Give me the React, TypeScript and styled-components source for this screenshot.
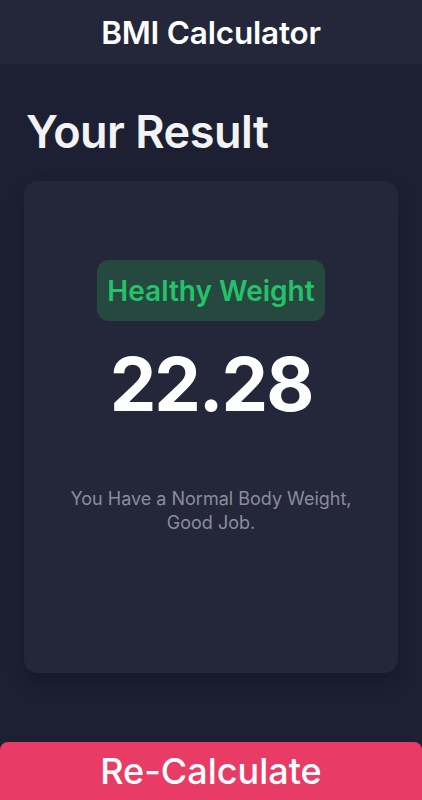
import React from "react";
import styled, { createGlobalStyle } from "styled-components";

const Global = createGlobalStyle`
  html, body { margin: 0; padding: 0; background: #1d2033; }
  body { font-family: Inter, "Noto Sans", sans-serif; -webkit-font-smoothing: antialiased; }
  * { box-sizing: border-box; }
`;

const Page = styled.div`
  display: flex;
  flex-direction: column;
  height: 800px;
  overflow: hidden;
  background: #1d2033;
`;

const Header = styled.header`
  height: 64px;
  flex: none;
  display: flex;
  align-items: center;
  justify-content: center;
  background: #24263a;
  color: #ffffff;
  font-size: 31.5px;
  font-weight: 600;
  letter-spacing: -0.2px;
`;

const Main = styled.main`
  flex: 1;
  display: flex;
  flex-direction: column;
  padding: 0 24px;
`;

const Title = styled.h1`
  margin: 40px 0 0 2px;
  height: 77px;
  color: #f3f3f5;
  font-size: 45px;
  font-weight: 600;
  line-height: 56px;
  letter-spacing: -0.5px;
`;

const Card = styled.section`
  height: 492px;
  background: #24263a;
  border-radius: 14px;
  box-shadow: 0 10px 18px rgba(10, 12, 24, 0.35);
  display: flex;
  flex-direction: column;
  align-items: center;
  padding-top: 79px;
`;

const Badge = styled.div`
  height: 61px;
  padding: 0 10px;
  border-radius: 12px;
  background: #26493f;
  color: #24c26a;
  font-size: 28px;
  font-weight: 600;
  display: flex;
  align-items: center;
`;

const Score = styled.div`
  margin-top: 10px;
  color: #ffffff;
  font-size: 74px;
  font-weight: 700;
  line-height: 106px;
  letter-spacing: -2px;
`;

const Message = styled.p`
  margin: 50px 0 0;
  color: #8b8c9e;
  font-size: 18px;
  line-height: 24px;
  text-align: center;
`;

const Button = styled.button`
  margin-top: auto;
  height: 58px;
  border: none;
  border-radius: 8px 8px 0 0;
  background: #e83b65;
  color: #ffffff;
  font-family: Inter, "Noto Sans", sans-serif;
  font-size: 36px;
  font-weight: 500;
  line-height: 58px;
  padding: 0;
  width: 100%;
`;

export default function App() {
  return (
    <>
      <Global />
      <Page>
        <Header>BMI Calculator</Header>
        <Main>
          <Title>Your Result</Title>
          <Card>
            <Badge>Healthy Weight</Badge>
            <Score>22.28</Score>
            <Message>
              You Have a Normal Body Weight,
              <br />
              Good Job.
            </Message>
          </Card>
        </Main>
        <Button>Re-Calculate</Button>
      </Page>
    </>
  );
}
